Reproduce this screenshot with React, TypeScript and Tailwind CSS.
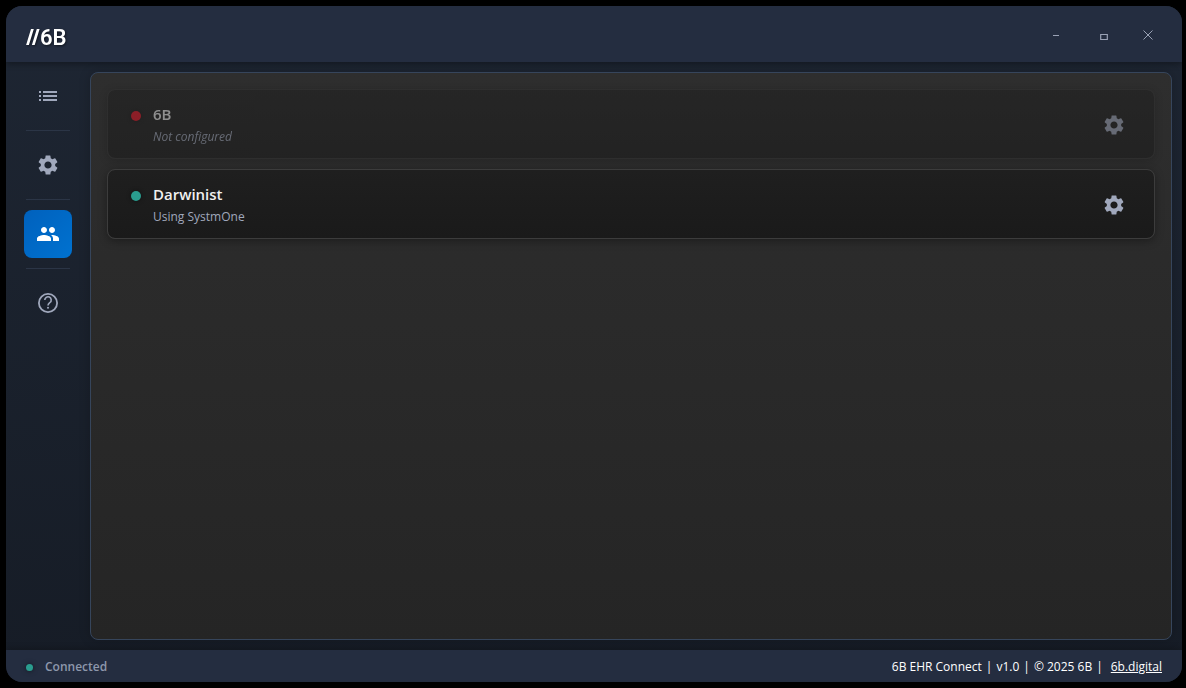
import React from "react";
import { MdList, MdPeople, MdSettings } from "react-icons/md";

function HelpIcon({ size }: { size: number }) {
  return (
    <svg width={size} height={size} viewBox="0 0 24 24" fill="none" stroke="currentColor" aria-hidden="true">
      <circle cx="12" cy="12" r="9.1" strokeWidth="1.8" />
      <path d="M8.8 9.1a3.2 3.2 0 1 1 5.2 2.4c-1.1.9-2 1.5-2 3.1" strokeWidth="1.6" />
      <circle cx="12" cy="16.7" r="1" fill="currentColor" stroke="none" />
    </svg>
  );
}

const navItems = [
  { label: "Activity", icon: MdList },
  { label: "Settings", icon: MdSettings },
  { label: "Clients", icon: MdPeople },
  { label: "Help", icon: HelpIcon },
];

const clients = [
  { name: "6B", detail: "Not configured", configured: false },
  { name: "Darwinist", detail: "Using SystmOne", configured: true },
];

function Logo() {
  return (
    <div className="flex items-center pt-2 text-white drop-shadow-[1px_1px_1px_rgba(0,0,0,0.5)]">
      <svg className="mb-0.5" width="14" height="16" viewBox="0 0 14 16" fill="currentColor" aria-hidden="true">
        <path d="M5 0h2.8L2.9 16H0.1zM10.8 0h2.8L8.7 16H5.9z" />
      </svg>
      <span className="font-[Roboto,sans-serif] text-[22px] leading-6 font-semibold">6B</span>
    </div>
  );
}

function TitleBar() {
  return (
    <header className="relative z-10 flex h-14 shrink-0 items-center justify-between bg-[#242d40] pr-3.5 pl-5 shadow-[0_2px_6px_rgba(0,0,0,0.35)]">
      <Logo />
      <div className="flex text-[#9aa2b5]">
        <button aria-label="Minimize" className="flex h-10 w-12 items-center justify-center">
          <svg width="12" height="12" viewBox="0 0 12 12" stroke="currentColor" aria-hidden="true">
            <path d="M3 7.5h6" />
          </svg>
        </button>
        <button aria-label="Maximize" className="flex h-10 w-12 items-center justify-center">
          <svg width="12" height="12" viewBox="0 0 12 12" fill="none" stroke="currentColor" aria-hidden="true">
            <path d="M2.7 6.5h6.6v5h-6.6z" strokeWidth="1.2" />
          </svg>
        </button>
        <button aria-label="Close" className="flex h-10 w-10 items-center justify-center">
          <svg width="12" height="12" viewBox="0 0 12 12" stroke="currentColor" aria-hidden="true">
            <path d="M1.5 2.5l9 9M10.5 2.5l-9 9" />
          </svg>
        </button>
      </div>
    </header>
  );
}

function Sidebar() {
  return (
    <nav className="flex w-21 shrink-0 flex-col items-center gap-2.5 pt-2.5">
      {navItems.map((item, i) => {
        const active = item.label === "Clients";
        const Icon = item.icon;

        return (
          <React.Fragment key={item.label}>
            {i > 0 && <div className="h-px w-11 bg-[#2b3546]" />}
            <button
              aria-label={item.label}
              className={`flex h-12 w-12 items-center justify-center rounded-lg ${
                active
                  ? "bg-linear-to-br from-[#0061bd] to-[#0072d0] text-white"
                  : "text-[#a0a8bc]"
              }`}
            >
              <Icon size={24} />
            </button>
          </React.Fragment>
        );
      })}
    </nav>
  );
}

function ClientCard({ name, detail, configured }: { name: string; detail: string; configured: boolean }) {
  return (
    <li
      className={`flex h-[70px] items-center justify-between rounded-lg border bg-linear-to-b from-[#1f1f1f] to-[#1a1a1a] bg-clip-padding pt-0.5 pr-4 pl-[23px] shadow-[0_2px_8px_rgba(0,0,0,0.35)] ${
        configured ? "border-[#3c3c3c]" : "border-[#303030] opacity-50"
      }`}
    >
      <div className="flex gap-3">
        <span
          className={`mt-[9px] h-2.5 w-2.5 rounded-full shadow-[0_0_4px_rgba(0,0,0,0.5)] ${
            configured ? "bg-[#2a9d8f]" : "bg-[#e81123]"
          }`}
        />
        <div>
          <h2 className="text-[15px] leading-6 font-semibold text-[#f0f0f0]">{name}</h2>
          <p className={`text-xs leading-[22px] text-[#a0a8bc] ${configured ? "" : "italic"}`}>{detail}</p>
        </div>
      </div>
      <button aria-label={`Configure ${name}`} className="flex h-12 w-12 items-center justify-center text-[#a0a8bc]">
        <MdSettings size={24} />
      </button>
    </li>
  );
}

function StatusBar() {
  return (
    <footer className="relative z-10 flex h-8 shrink-0 items-center justify-between bg-[#242d40] px-5 pt-0.5 text-xs shadow-[0_-2px_6px_rgba(0,0,0,0.2)]">
      <div className="flex items-center gap-3 font-semibold text-[#8e98ac]">
        <span className="h-[7px] w-[7px] rounded-full bg-[#2a9d8f] shadow-[0_0_5px_rgba(0,0,0,0.5)]" />
        Connected
      </div>
      <div className="flex gap-1 text-white">
        <span>6B EHR Connect</span>
        <span>|</span>
        <span>v1.0</span>
        <span>|</span>
        <span>© 2025 6B</span>
        <span>|</span>
        <a href="#" className="ml-1 underline">
          6b.digital
        </a>
      </div>
    </footer>
  );
}

export default function App() {
  return (
    <div className="flex min-h-screen bg-black py-1.5 pr-1 pl-1.5 font-['Open_Sans','Noto_Sans',sans-serif]">
      <div className="flex flex-1 flex-col overflow-hidden rounded-2xl bg-linear-to-b from-[#1e2633] to-[#161c26]">
        <TitleBar />
        <div className="flex flex-1">
          <Sidebar />
          <main className="my-2.5 mr-2.5 flex-1 rounded-lg border border-[#36455b] bg-linear-to-b from-[#2e2e2e] to-[#252525] p-4 shadow-[0_0_12px_rgba(0,0,0,0.2)]">
            <ul className="flex flex-col gap-2.5">
              {clients.map((client) => (
                <ClientCard key={client.name} {...client} />
              ))}
            </ul>
          </main>
        </div>
        <StatusBar />
      </div>
    </div>
  );
}
